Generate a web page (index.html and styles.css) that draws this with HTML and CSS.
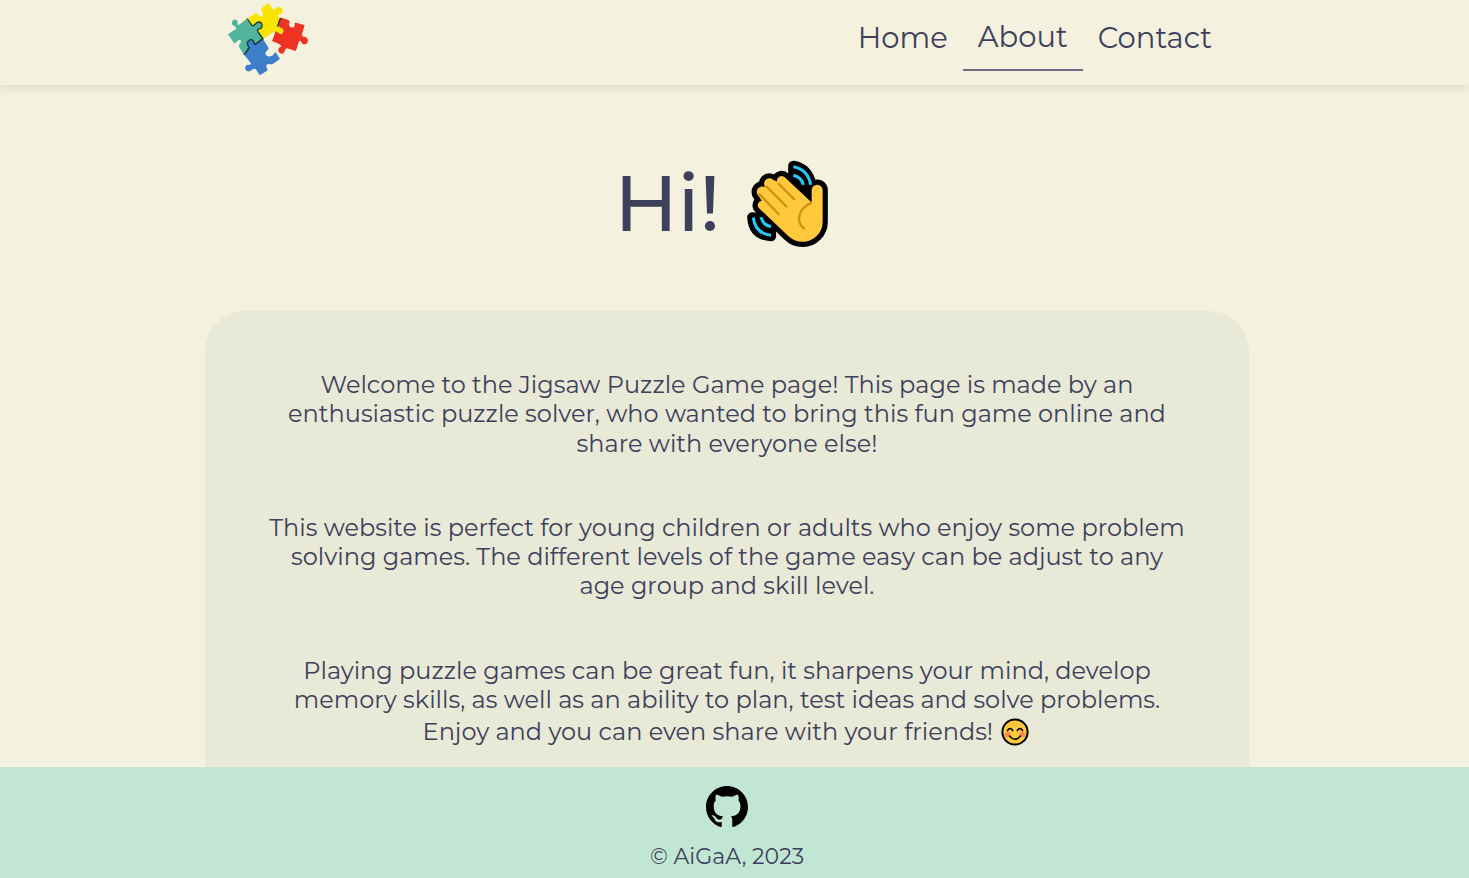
FILE: index.html
```html
<!DOCTYPE html>
<html lang="en">
<head>
<meta charset="utf-8">
<meta name="viewport" content="width=device-width, initial-scale=1">
<title>Jigsaw Puzzle Game - About</title>
<link rel="stylesheet" href="styles.css">
</head>
<body>
<header class="site-header">
  <div class="header-inner">
    <a class="logo" href="#" aria-label="Jigsaw Puzzle Game">
      <svg viewBox="24 8 240 218" aria-hidden="true">
        <path fill="#f9e400" d="M82 57L106 42C112 38 118 54 127 50C134 40 122 34 124 27L145 10L158 28C164 36 164 24 176 22C188 24 192 38 182 44C172 46 170 46 175 53L181 56L172 82C180 84 192 84 190 96C184 106 172 100 165 94L129 116L100 100Z"/>
        <path fill="#52b59b" stroke="#173c38" stroke-width="4" d="M82 57L96 76C104 84 106 68 116 67C130 68 130 86 116 88C108 92 118 100 129 116L108 132C100 137 106 122 96 119C84 118 80 130 86 138C92 146 82 152 73 163"/>
        <path fill="#52b59b" d="M82 57L100 90L120 110L86 135L73 163L60 143C54 130 66 132 64 122C58 114 54 126 45 130L26 103L46 90C56 84 46 80 40 76C32 66 44 55 52 62C58 68 50 78 60 74Z"/>
        <path fill="#3d7ecb" d="M129 116L108 132C100 137 106 122 96 119C84 118 80 130 86 138C92 146 82 152 73 163L92 186C96 190 94 194 84 193C74 196 74 210 86 213C96 212 100 200 108 206L120 224L140 211C146 206 138 202 139 195C145 186 152 194 158 191L179 176L168 158C163 152 162 166 152 168C138 170 132 158 140 152C148 148 145 140 143 139Z"/>
        <path fill="none" stroke="#173c38" stroke-width="4" d="M129 116L108 132C100 137 106 122 96 119C84 118 80 130 86 138C92 146 82 152 73 163"/>
        <path fill="#ef3323" d="M182 54L205 62C212 66 202 74 208 80C216 88 226 80 222 72C222 66 230 70 252 76L244 104C244 112 250 110 254 111C266 116 264 132 250 133C240 130 244 122 236 122L226 152L200 144C192 146 196 154 188 160C176 162 170 148 178 142C188 138 184 134 156 123L166 95C170 92 174 104 184 102C194 96 190 84 180 84C174 82 176 76 182 54Z"/>
        <path stroke="#222" stroke-width="4" d="M181 55L172 81"/>
      </svg>
    </a>
    <nav class="nav" aria-label="Main">
      <a class="nav-link" href="#">Home</a>
      <a class="nav-link active" href="#" aria-current="page">About</a>
      <a class="nav-link" href="#">Contact</a>
    </nav>
  </div>
</header>
<main class="content">
  <h1 class="title"><span>Hi!</span>
    <svg class="wave" viewBox="24 28 243 260" aria-hidden="true" fill="none" stroke-linecap="round" stroke-linejoin="round">
      <g stroke="#000" stroke-width="31">
        <path fill="#000" d="M163 45Q207 53 217 102L193 105L163 72Z"/>
        <path fill="#000" d="M40 200Q44 252 96 256L95 227L66 202Z"/>
        <path fill="#000" d="M218 155V118A16 16 0 0 1 251 118V212A60 60 0 0 1 191 273Q165 273 146 254L61 173A13 13 0 0 1 68 150L60 137A14 14 0 0 1 80 110A14 14 0 0 1 102 87L114 92A14 14 0 0 1 138 80Z"/>
      </g>
      <path fill="#ffc83d" d="M218 155V118A16 16 0 0 1 251 118V212A60 60 0 0 1 191 273Q165 273 146 254L61 173A13 13 0 0 1 68 150L60 137A14 14 0 0 1 80 110A14 14 0 0 1 102 87L114 92A14 14 0 0 1 138 80Z"/>
      <path stroke="#d6900e" stroke-width="7" d="M119 99L165 145M84 108L142 167M61 130L119 190M216 156C174 176 172 214 195 233"/>
      <path stroke="#26c6f7" stroke-width="9" stroke-linecap="butt" d="M163 48Q207 56 215 102M163 73Q188 79 193 102M43 200Q48 248 96 253M66 199Q72 224 96 227"/>
    </svg>
  </h1>
  <section class="card">
    <p>Welcome to the Jigsaw Puzzle Game page! This page is made by an<br>enthusiastic puzzle solver, who wanted to bring this fun game online and<br>share with everyone else!</p>
    <p>This website is perfect for young children or adults who enjoy some problem<br>solving games. The different levels of the game easy can be adjust to any<br>age group and skill level.</p>
    <p>Playing puzzle games can be great fun, it sharpens your mind, develop<br>memory skills, as well as an ability to plan, test ideas and solve problems.<br>Enjoy and you can even share with your friends!
      <svg class="smile" viewBox="0 0 28 28" aria-hidden="true" fill="none" stroke="#000" stroke-linecap="round">
        <circle cx="14" cy="14" r="12.6" fill="#ffc83d" stroke-width="2"/>
        <circle cx="6.5" cy="16.5" r="2.8" fill="#ff8a57" stroke="none"/>
        <circle cx="21.5" cy="16.5" r="2.8" fill="#ff8a57" stroke="none"/>
        <path stroke-width="1.5" d="M6.5 12.5Q9 8.5 11.8 12.5M16.2 12.5Q19 8.5 21.5 12.5M8.5 18Q14 24.5 19.5 18"/>
      </svg></p>
  </section>
</main>
<footer class="site-footer">
  <a class="github" href="#" aria-label="GitHub">
    <svg viewBox="0 0 16 16" aria-hidden="true"><path d="M8 0C3.58 0 0 3.58 0 8c0 3.54 2.29 6.53 5.47 7.59.4.07.55-.17.55-.38 0-.19-.01-.82-.01-1.49-2.01.37-2.53-.49-2.69-.94-.09-.23-.48-.94-.82-1.13-.28-.15-.68-.52-.01-.53.63-.01 1.08.58 1.23.82.72 1.21 1.87.87 2.33.66.07-.52.28-.87.51-1.07-1.78-.2-3.64-.89-3.64-3.95 0-.87.31-1.59.82-2.15-.08-.2-.36-1.02.08-2.12 0 0 .67-.21 2.2.82.64-.18 1.32-.27 2-.27s1.36.09 2 .27c1.53-1.04 2.2-.82 2.2-.82.44 1.1.16 1.92.08 2.12.51.56.82 1.27.82 2.15 0 3.07-1.87 3.75-3.65 3.95.29.25.54.73.54 1.48 0 1.07-.01 1.93-.01 2.2 0 .21.15.46.55.38A8.01 8.01 0 0 0 16 8c0-4.42-3.58-8-8-8z"/></svg>
  </a>
  <p class="copyright">© AiGaA, 2023</p>
</footer>
</body>
</html>
```
FILE: styles.css
```css
* { box-sizing: border-box; }

body {
  margin: 0;
  height: 100vh;
  display: flex;
  flex-direction: column;
  background: #f4f1de;
  color: #3d405b;
  font-family: Montserrat, Inter, "Open Sans", sans-serif;
  font-size: 24px;
  font-weight: 400;
  line-height: 1.22;
}

svg { display: block; }

.site-header {
  flex: none;
  height: 85px;
  padding-right: 15px;
  box-shadow: 0 2px 10px rgba(0, 0, 0, 0.1);
  z-index: 1;
}

.header-inner {
  display: flex;
  justify-content: space-between;
  align-items: flex-start;
  max-width: 1000px;
  margin: 0 auto;
}

.logo { padding-top: 2px; }
.logo svg { width: 82px; height: 74px; }

.nav { display: flex; }

.nav-link {
  padding: 20px 15px 14px;
  color: inherit;
  font-size: 29px;
  line-height: 36px;
  text-decoration: none;
}

.active {
  padding: 19px 15px 14px;
  border-bottom: 2px solid #6a6a80;
}

.content {
  flex: 1;
  min-height: 0;
  overflow-y: auto;
  scrollbar-width: none;
  padding-right: 15px;
}

.title {
  display: flex;
  justify-content: center;
  align-items: center;
  gap: 26px;
  margin: 70px 0 60px;
  padding-right: 12px;
  font-size: 78px;
  font-weight: 500;
  line-height: 96px;
}

.wave { width: 81px; height: 87px; }

.card {
  max-width: 1044px;
  margin: 0 auto 56px;
  padding: 59px 40px;
  border-radius: 40px;
  background: #e8e9d7;
  text-align: center;
}

.card p { margin: 0 0 55px; }

.smile {
  display: inline-block;
  width: 28px;
  height: 28px;
  margin: 4px 2px 0 2px;
  vertical-align: -6px;
}

.site-footer {
  flex: none;
  display: flex;
  flex-direction: column;
  align-items: center;
  gap: 15px;
  padding: 19px 15px 7px 0;
  background: #c2e6d4;
}

.github svg { width: 42px; height: 42px; }

.copyright {
  margin: 0;
  font-size: 22px;
  line-height: 28px;
}
```
